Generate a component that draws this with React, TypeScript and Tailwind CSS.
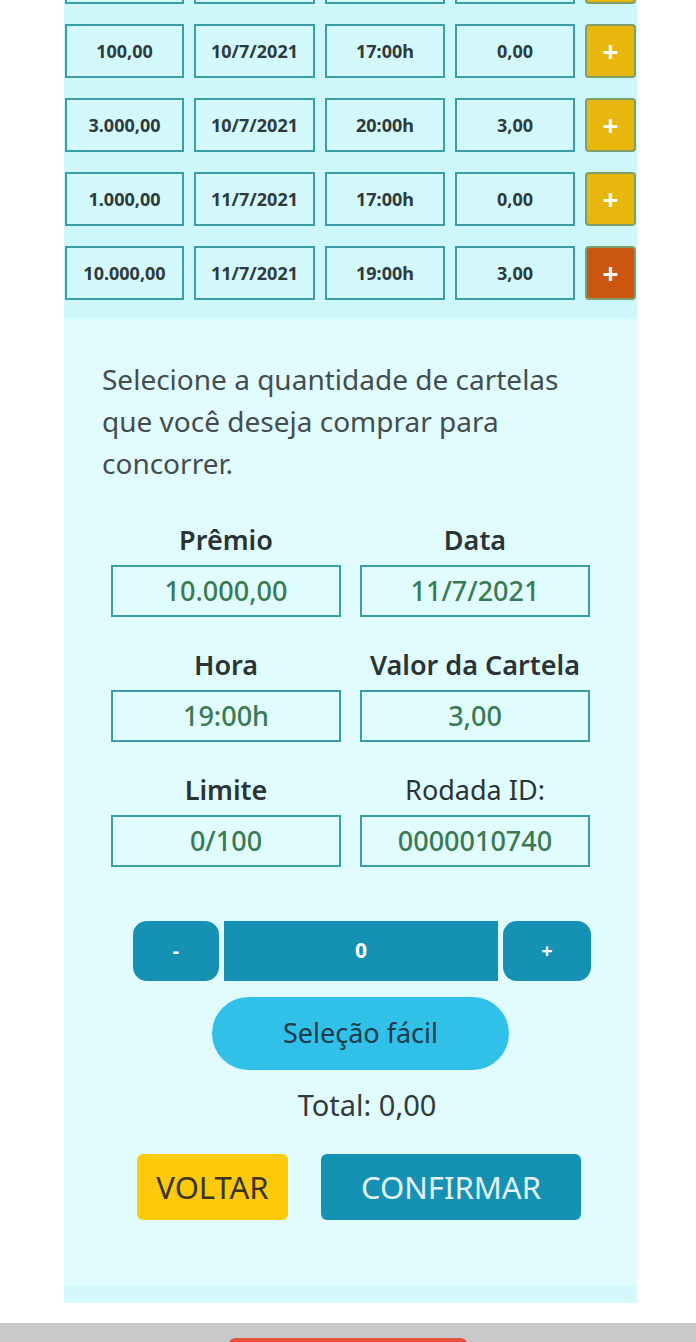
import React from "react";

const rows = [
  { premio: "", data: "", hora: "", valor: "", active: false, top: true },
  { premio: "100,00", data: "10/7/2021", hora: "17:00h", valor: "0,00", active: false, top: false },
  { premio: "3.000,00", data: "10/7/2021", hora: "20:00h", valor: "3,00", active: false, top: false },
  { premio: "1.000,00", data: "11/7/2021", hora: "17:00h", valor: "0,00", active: false, top: false },
  { premio: "10.000,00", data: "11/7/2021", hora: "19:00h", valor: "3,00", active: true, top: false },
];

const details = [
  { label: "Prêmio", value: "10.000,00", bold: true },
  { label: "Data", value: "11/7/2021", bold: true },
  { label: "Hora", value: "19:00h", bold: true },
  { label: "Valor da Cartela", value: "3,00", bold: true },
  { label: "Limite", value: "0/100", bold: true },
  { label: "Rodada ID:", value: "0000010740", bold: false },
];

function Cell({ text, w }: { text: string; w: string }) {
  return (
    <div
      className={`${w} h-[54px] flex items-center justify-center border-2 border-[#3b9ea6] bg-[#d3f9fd] text-[18px] font-bold text-[#2f3a3c]`}
    >
      {text}
    </div>
  );
}

export default function App() {
  return (
    <div className="w-[696px] h-[1342px] overflow-hidden bg-white font-['Noto_Sans',sans-serif] flex flex-col">
      <div className="ml-[64px] w-[573px] flex flex-col">
        {/* rounds list */}
        <div className="-mt-[50px] bg-[#cdf7fb] pl-[1px] pb-[19px] flex flex-col gap-[20px]">
          {rows.map((r, i) => (
            <div key={i} className="flex gap-[10px]">
              <Cell text={r.premio} w="w-[119px]" />
              <Cell text={r.data} w="w-[121px]" />
              <Cell text={r.hora} w="w-[120px]" />
              <Cell text={r.valor} w="w-[120px]" />
              <button
                className={`w-[51px] h-[54px] rounded-[4px] border-2 border-[#7f9e6b] flex items-center justify-center text-white text-[28px] font-bold leading-none ${
                  r.active ? "bg-[#ca560f]" : "bg-[#e8b60c]"
                }`}
              >
                {r.top ? "" : "+"}
              </button>
            </div>
          ))}
        </div>

        {/* purchase panel */}
        <div className="bg-[#e0fcfe] pt-[39px] pb-[66px]">
          <p className="ml-[38px] w-[470px] text-[28px] leading-[42px] text-[#454c4e]">
            Selecione a quantidade de cartelas que você deseja comprar para concorrer.
          </p>

          <div className="mt-[38px] ml-[47px] w-[479px] grid grid-cols-2 gap-x-[19px] gap-y-[30px]">
            {details.map((d) => (
              <div key={d.label} className="flex flex-col items-center">
                <div
                  className={`text-[27px] leading-[36px] text-[#2b3335] whitespace-nowrap ${
                    d.bold ? "font-semibold" : "font-normal"
                  }`}
                >
                  {d.label}
                </div>
                <div className="mt-[7px] w-full h-[52px] border-2 border-[#3b9ea6] flex items-center justify-center text-[27px] text-[#3a7a52] font-medium">
                  {d.value}
                </div>
              </div>
            ))}
          </div>

          <div className="mt-[54px] ml-[69px] flex items-stretch h-[60px]">
            <button className="w-[86px] rounded-[14px] bg-[#1591b4] text-white font-bold text-[20px]">
              -
            </button>
            <div className="ml-[5px] w-[274px] bg-[#1591b4] flex items-center justify-center text-white font-bold text-[21px]">
              0
            </div>
            <button className="ml-[5px] w-[88px] rounded-[14px] bg-[#1591b4] text-white font-bold text-[20px]">
              +
            </button>
          </div>

          <button className="mt-[16px] ml-[148px] block w-[297px] h-[73px] rounded-full bg-[#30c0e8] text-[27px] text-[#1f3a48]">
            Seleção fácil
          </button>

          <div className="mt-[15px] pl-[33px] text-center text-[29px] leading-[40px] text-[#333a3c]">
            Total: 0,00
          </div>

          <div className="mt-[29px] ml-[73px] flex gap-[33px]">
            <button className="w-[151px] h-[66px] rounded-[6px] bg-[#fdc90b] text-[31px] text-[#3a3420]">
              VOLTAR
            </button>
            <button className="w-[260px] h-[66px] rounded-[6px] bg-[#1591b4] text-[31px] text-[#e4f4f6]">
              CONFIRMAR
            </button>
          </div>
        </div>
        <div className="h-[17px] bg-[#d3f9fd]" />
      </div>
      <div className="h-[20px] shrink-0" />
      <div className="flex-1 bg-[#c9c9cb] flex justify-center">
        <div className="mt-[15px] w-[240px] h-[10px] rounded-t-[8px] bg-[#e4513a]" />
      </div>
    </div>
  );
}
